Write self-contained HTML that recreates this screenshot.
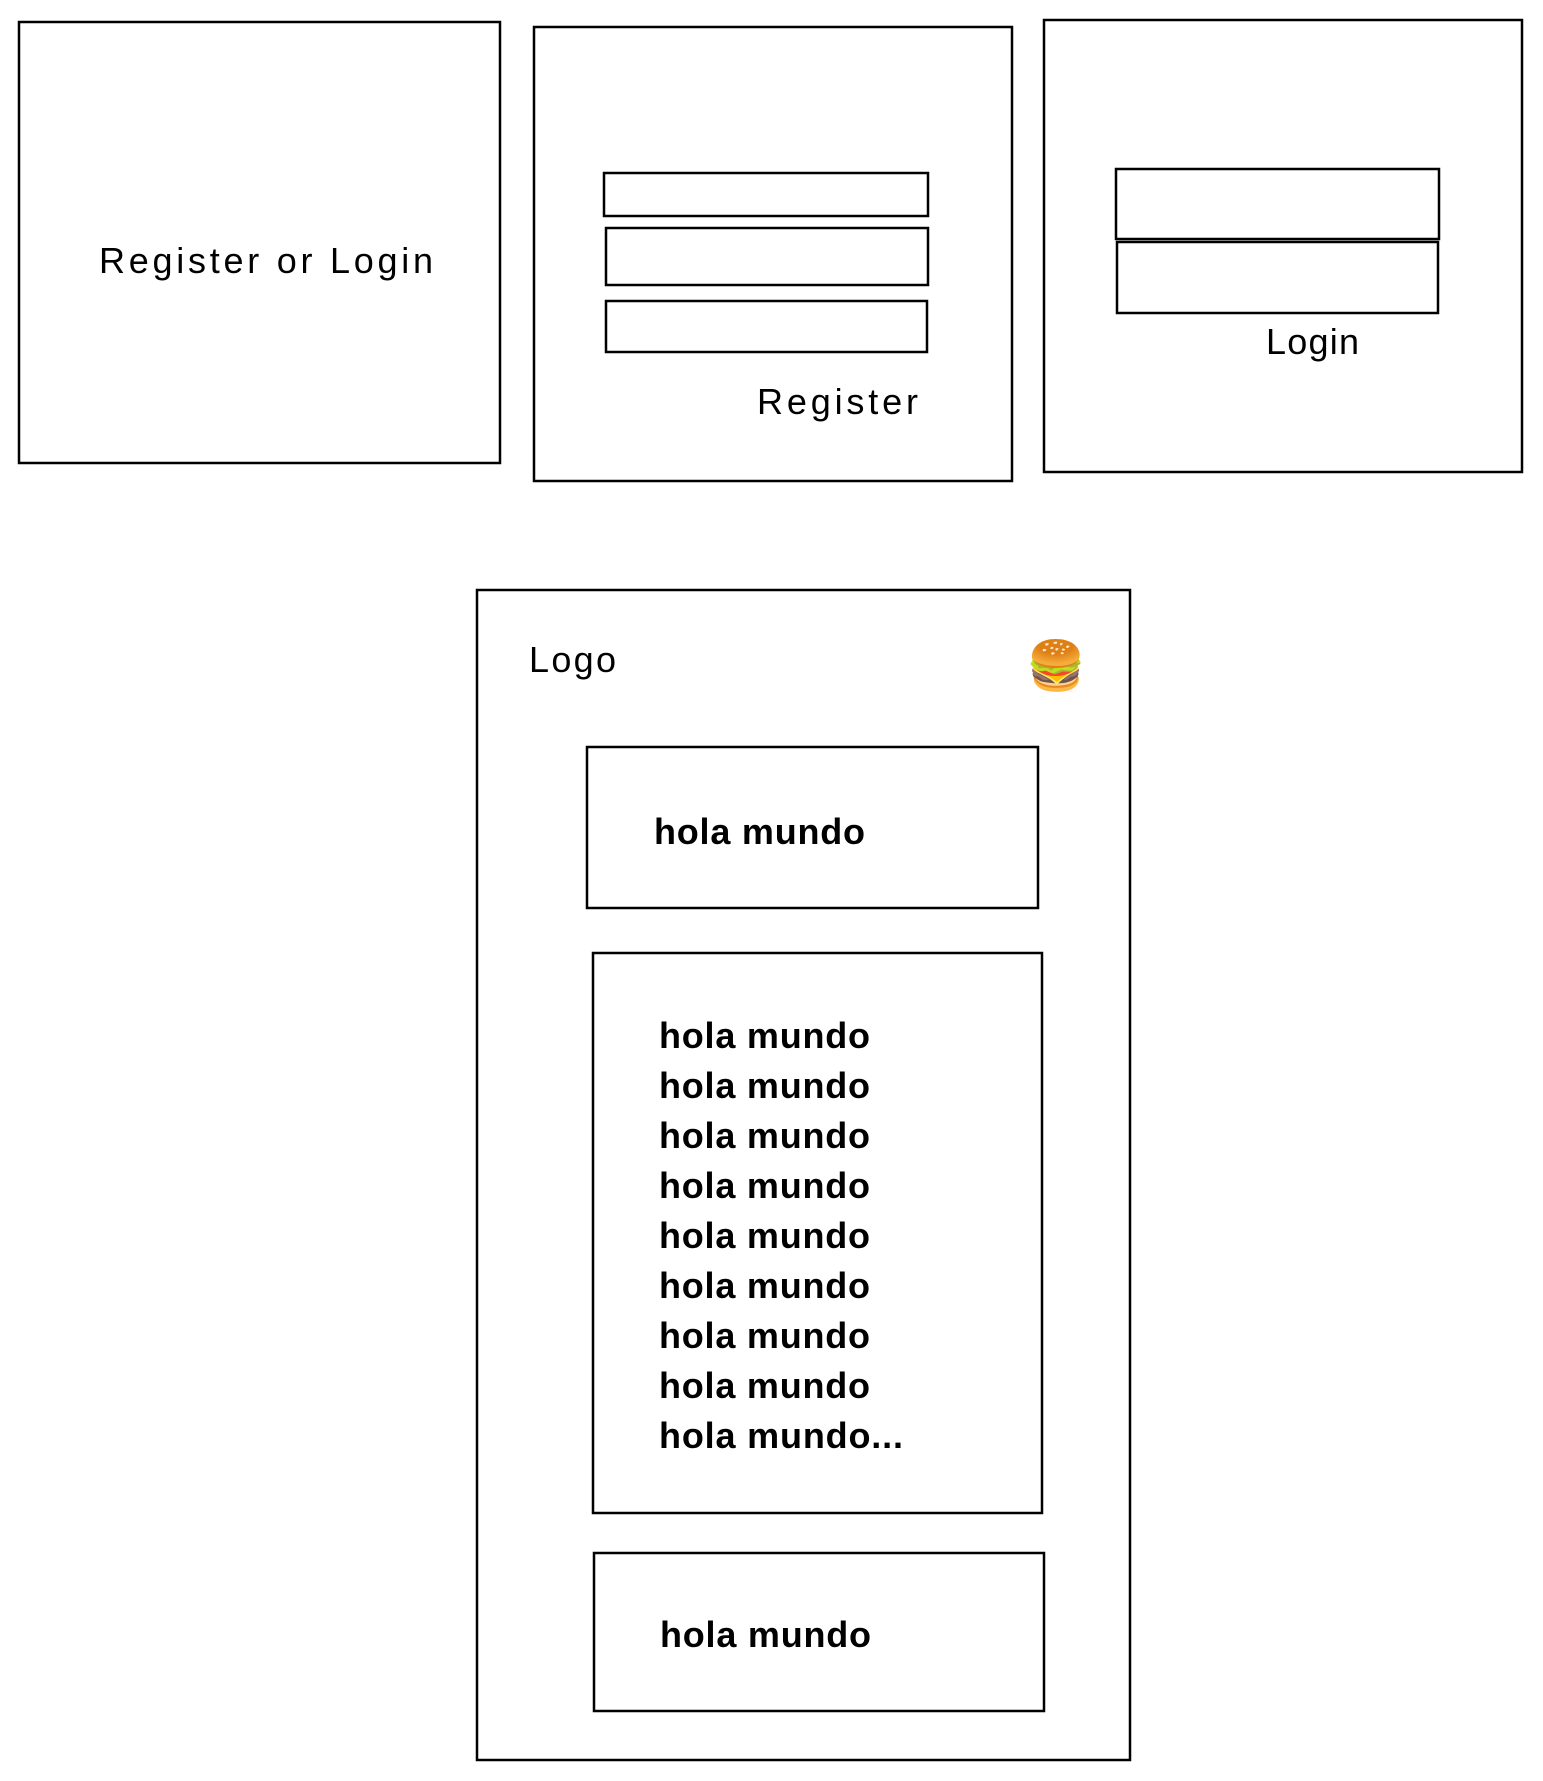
<!DOCTYPE html>
<html><head><meta charset="utf-8"><style>
html,body{margin:0;padding:0;background:#fff;}
svg{display:block}
text{font-family:"Liberation Sans",sans-serif;fill:#000;}
</style></head><body>
<svg width="1543" height="1781" viewBox="0 0 1543 1781" xmlns="http://www.w3.org/2000/svg">
<g fill="none" stroke="#000" stroke-width="2.5">
<rect x="19" y="22" width="481" height="441"/>
<rect x="534" y="27" width="478" height="454"/>
<rect x="604" y="173" width="324" height="43"/>
<rect x="606" y="228" width="322" height="57"/>
<rect x="606" y="301" width="321" height="51"/>
<rect x="1044" y="20" width="478" height="452"/>
<rect x="1116" y="169" width="323" height="70"/>
<rect x="1117" y="242" width="321" height="71"/>
<rect x="477" y="590" width="653" height="1170"/>
<rect x="587" y="747" width="451" height="161"/>
<rect x="593" y="953" width="449" height="560"/>
<rect x="594" y="1553" width="450" height="158"/>
</g>
<g font-size="36">
<text x="99" y="273" textLength="334" lengthAdjust="spacing">Register or Login</text>
<text x="757" y="414" textLength="161" lengthAdjust="spacing">Register</text>
<text x="1266" y="354" textLength="93" lengthAdjust="spacing">Login</text>
<text x="529" y="672" textLength="87" lengthAdjust="spacing">Logo</text>
</g>
<text x="1026" y="682" font-size="48">🍔</text>
<g font-size="36" font-weight="bold">
<text x="654" y="844" textLength="211" lengthAdjust="spacing">hola mundo</text>
<text x="659" y="1048" textLength="211" lengthAdjust="spacing">hola mundo</text>
<text x="659" y="1098" textLength="211" lengthAdjust="spacing">hola mundo</text>
<text x="659" y="1148" textLength="211" lengthAdjust="spacing">hola mundo</text>
<text x="659" y="1198" textLength="211" lengthAdjust="spacing">hola mundo</text>
<text x="659" y="1248" textLength="211" lengthAdjust="spacing">hola mundo</text>
<text x="659" y="1298" textLength="211" lengthAdjust="spacing">hola mundo</text>
<text x="659" y="1348" textLength="211" lengthAdjust="spacing">hola mundo</text>
<text x="659" y="1398" textLength="211" lengthAdjust="spacing">hola mundo</text>
<text x="659" y="1448" textLength="244" lengthAdjust="spacing">hola mundo...</text>
<text x="660" y="1647" textLength="211" lengthAdjust="spacing">hola mundo</text>
</g>
</svg>
</body></html>
